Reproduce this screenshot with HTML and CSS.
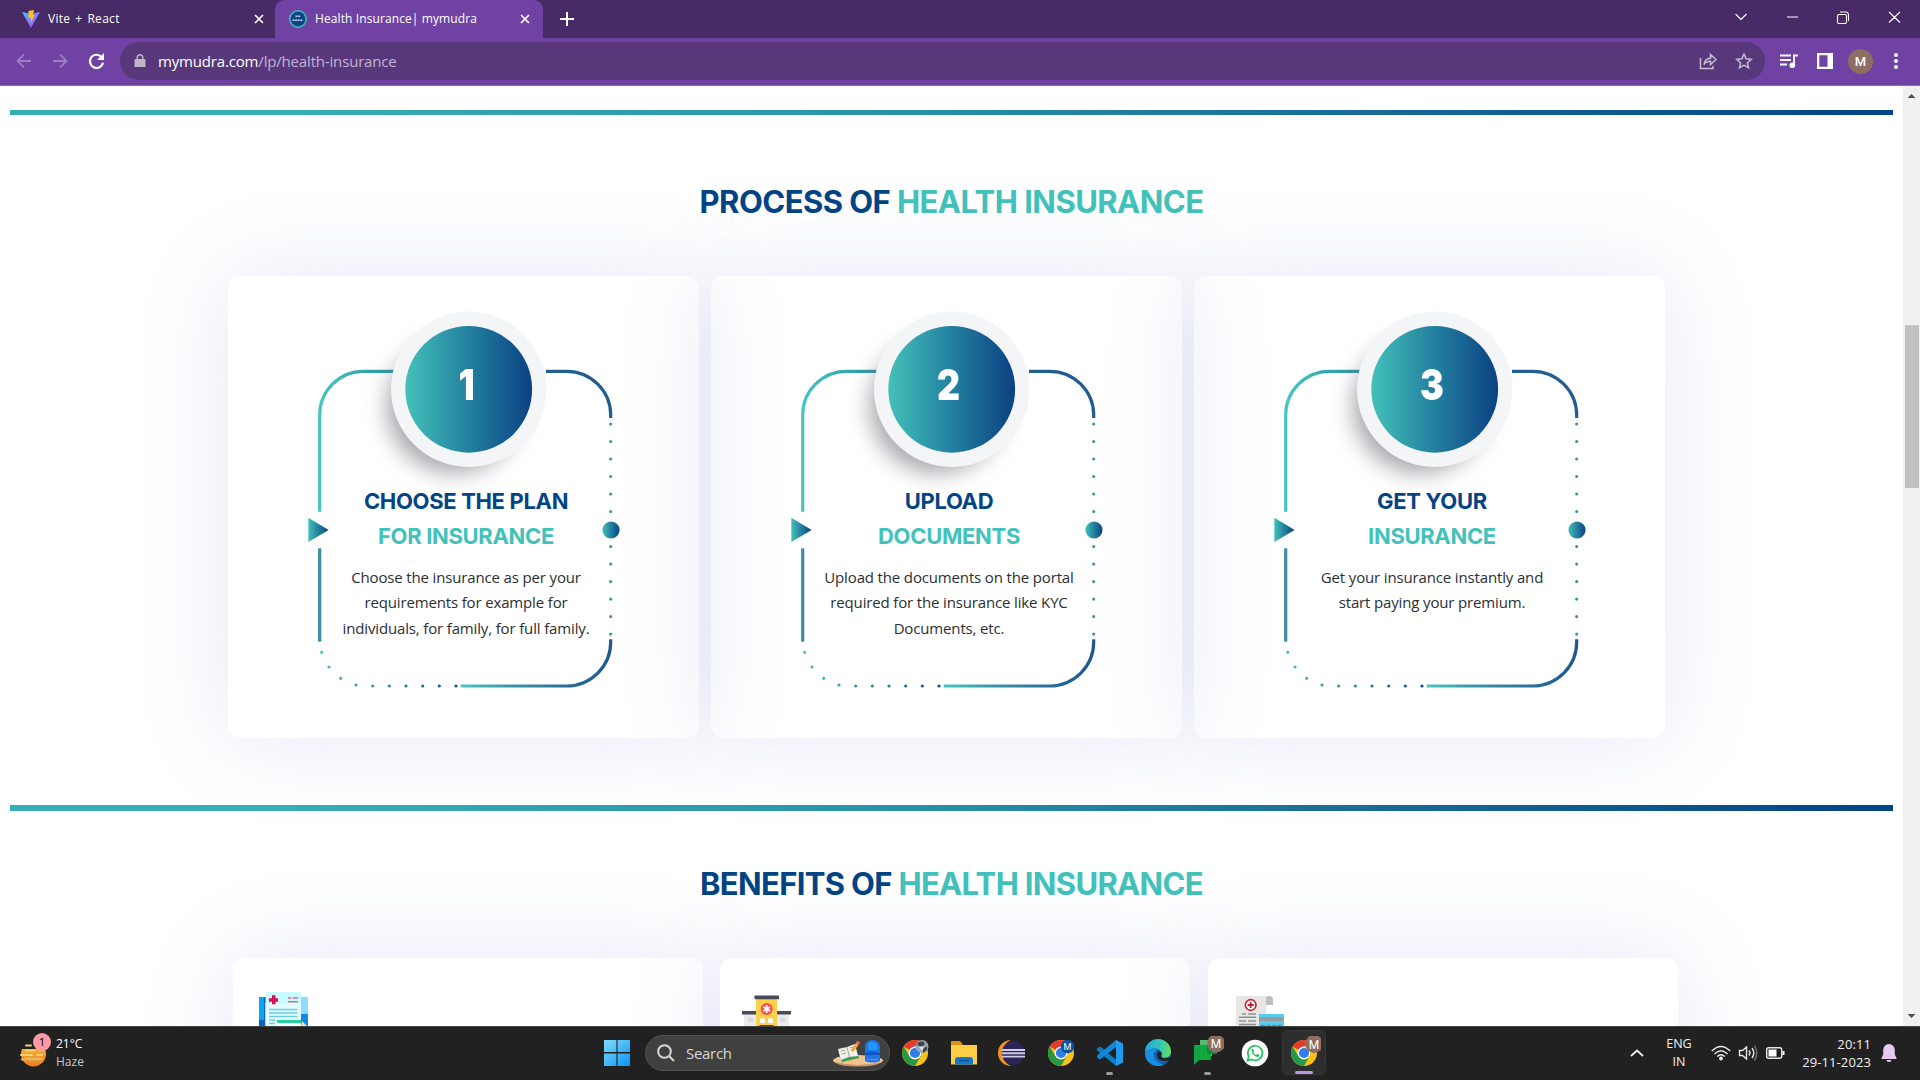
FILE: index.html
```html
<!DOCTYPE html>
<html lang="en">
<head>
<meta charset="utf-8">
<title>Health Insurance| mymudra</title>
<link rel="stylesheet" href="styles.css">
</head>
<body>
<svg class="defs" width="0" height="0" aria-hidden="true">
  <defs>
    <linearGradient id="disc"><stop offset="0" stop-color="#43c1b9"/><stop offset=".5" stop-color="#2380a0"/><stop offset="1" stop-color="#0b4182"/></linearGradient>
    <linearGradient id="topLeft" gradientUnits="userSpaceOnUse" x1="92" y1="0" x2="165" y2="0"><stop offset="0" stop-color="#46c5be"/><stop offset="1" stop-color="#2893a5"/></linearGradient>
    <linearGradient id="topRight" gradientUnits="userSpaceOnUse" x1="318" y1="0" x2="383" y2="0"><stop offset="0" stop-color="#1f6292"/><stop offset="1" stop-color="#225b90"/></linearGradient>
    <linearGradient id="bottomRight" gradientUnits="userSpaceOnUse" x1="233" y1="0" x2="383" y2="0"><stop offset="0" stop-color="#4bc6bf"/><stop offset=".3" stop-color="#3c98ab"/><stop offset=".75" stop-color="#286a98"/><stop offset="1" stop-color="#1f588e"/></linearGradient>
    <linearGradient id="dots" gradientUnits="userSpaceOnUse" x1="92" y1="0" x2="230" y2="0"><stop offset="0" stop-color="#46c5be"/><stop offset="1" stop-color="#16498a"/></linearGradient>
    <linearGradient id="winBlue" x2="1" y2="1"><stop offset="0" stop-color="#7fdcfb"/><stop offset="1" stop-color="#0d94f5"/></linearGradient>
    <linearGradient id="vite" x2="1" y2="1"><stop offset="0" stop-color="#41c8ff"/><stop offset="1" stop-color="#bd34fe"/></linearGradient>
    <linearGradient id="edgeTop" x2="1"><stop offset="0" stop-color="#2aa5dc"/><stop offset=".6" stop-color="#35c7b5"/><stop offset="1" stop-color="#6bdf55"/></linearGradient>
    <linearGradient id="haze" x2="0" y2="1"><stop offset="0" stop-color="#f5c542"/><stop offset="1" stop-color="#ee7c1c"/></linearGradient>
    <filter id="soft" x="-40%" y="-40%" width="180%" height="180%"><feGaussianBlur stdDeviation="11"/></filter>
    <symbol id="frame" viewBox="0 0 471 462">
      <g fill="none" stroke-width="3.2">
        <path stroke="url(#topLeft)" d="M166 95.3H135.3A43.7 43.7 0 0 0 91.7 139V235.7"/>
        <path stroke="url(#topRight)" d="M318 95.3H338.7A44 44 0 0 1 382.7 139.3V142"/>
        <path stroke="url(#bottomRight)" d="M382.7 363.3V366A44 44 0 0 1 338.7 410H232.7"/>
        <path stroke="#3b8ba5" d="M91.7 272.3V365.7"/>
        <path stroke="#3e93aa" stroke-linecap="round" stroke-dasharray="0 17.5" d="M382.7 148V236M382.7 270.6V359"/>
      </g>
      <path stroke="url(#dots)" stroke-width="3.2" stroke-linecap="round" d="M93.7 376.3h.01M101 391h.01M112.7 402.3h.01M128 409h.01M144.7 410h.01M161.3 410h.01M178 410h.01M194.7 410h.01M211.3 410h.01M228 410h.01"/>
      <path fill="url(#disc)" d="M80.3 241.7V266L100.7 254Z"/>
      <circle cx="383" cy="254" r="8.6" fill="url(#disc)"/>
      <circle cx="226" cy="130" r="67" fill="#7b7f85" opacity=".68" filter="url(#soft)"/>
      <circle cx="240.7" cy="113.3" r="77.7" fill="#f3f5f7"/>
      <circle cx="240.7" cy="113.3" r="63.4" fill="url(#disc)"/>
    </symbol>
    <symbol id="chrome" viewBox="0 0 28 28">
      <circle cx="14" cy="14" r="13" fill="#fbc116"/>
      <path fill="#e33b2e" d="M14 14 2.74 7.5A13 13 0 0 1 25.26 7.5H14Z"/>
      <path fill="#279847" d="M2.74 7.5A13 13 0 0 0 14 27L19.6 17.3 14 14 8.4 17.3Z"/>
      <circle cx="14" cy="14" r="6.4" fill="#fff"/><circle cx="14" cy="14" r="5.1" fill="#2f7de9"/>
    </symbol>
  </defs>
</svg>

<header class="browser">
  <div class="tabs">
    <div class="tab">
      <svg class="fav" viewBox="0 0 18 18"><path fill="url(#vite)" d="M0 2 9 18 18 2 9 4Z"/><path fill="#ffc21a" d="M6.5 1 12 0 11 5 13 5 8.5 13 9 7.5 6.5 8Z"/></svg>
      <span class="tab-title wide">Vite + React</span>
      <svg class="x" viewBox="0 0 10 10"><path d="M1 1 9 9M9 1 1 9"/></svg>
    </div>
    <div class="tab active">
      <svg class="fav" viewBox="0 0 18 18"><circle cx="9" cy="9" r="8.2" fill="#0b4488" stroke="#3dc1bb" stroke-width="1.5"/><path stroke="#c7d6e8" stroke-width="1.4" stroke-dasharray="2 .6" d="M6.5 6.3H11.5M3.5 10.2H14"/></svg>
      <span class="tab-title">Health Insurance| mymudra</span>
      <svg class="x" viewBox="0 0 10 10"><path d="M1 1 9 9M9 1 1 9"/></svg>
    </div>
    <svg class="plus" viewBox="0 0 14 14"><path d="M7 0V14M0 7H14"/></svg>
    <svg class="winbtns" viewBox="0 0 170 14"><path d="M1.5 4 7 9.5 12.5 4M53 7H64M104 4.5h7a1.5 1.5 0 0 1 1.5 1.5v6a1.5 1.5 0 0 1-1.5 1.5h-6A1.5 1.5 0 0 1 103.5 12V6A1.5 1.5 0 0 1 105 4.5M106 2h5.500a3 3 0 0 1 3 3v6M155 2 166 12.500M166 2 155 12.500"/></svg>
  </div>
  <div class="toolbar">
    <svg class="nav" viewBox="0 0 90 20"><path class="dim" d="M15 10H2M8 3.500 1.500 10 8 16.500M37 10H50M44 3.500 50.500 10 44 16.500"/><path class="bright" d="M85.500 6A6.600 6.600 0 1 0 87 11.700"/><path fill="#fff" d="M88 2V9H81Z"/></svg>
    <div class="address">
      <svg class="lock" viewBox="0 0 12 14"><path fill="#bdb8c4" d="M1.500 5H10.500a.9.900 0 0 1 .9.900V13H.6V5.900A.9.900 0 0 1 1.500 5Z"/><path fill="none" stroke="#bdb8c4" stroke-width="1.400" d="M3.200 5.500V3.500A2.800 2.800 0 0 1 8.800 3.500V5.500"/></svg>
      <span class="url">mymudra.com<span class="path">/lp/health-insurance</span></span>
      <svg class="share" viewBox="0 0 18 18"><path d="M1.500 6V16.500H14V14M5 12.500C5.500 8.500 8 6.500 11.500 6.300V2.500L17 7.500 11.500 12.500V9.300C8.500 9.300 6.500 10.300 5 12.500Z"/></svg>
      <svg class="star" viewBox="0 0 18 18"><path d="M9 2 11.100 6.800 16.300 7.300 12.400 10.700 13.500 15.800 9 13.100 4.500 15.800 5.600 10.700 1.700 7.300 6.900 6.800Z"/></svg>
    </div>
    <svg class="queue" viewBox="0 0 18 16"><path stroke="#fff" stroke-width="1.800" d="M0 2.500H11M0 7H11M0 11.500H7M14 12V2.500H18"/><circle cx="12.300" cy="12.200" r="2.800" fill="#fff"/></svg>
    <svg class="side" viewBox="0 0 16 16"><path fill="#fff" fill-rule="evenodd" d="M0 0H16V16H0ZM2.300 2.300V13.700H10.500V2.300Z"/></svg>
    <span class="avatar">M</span>
    <svg class="more" viewBox="0 0 4 16"><circle cx="2" cy="2" r="2"/><circle cx="2" cy="8" r="2"/><circle cx="2" cy="14" r="2"/></svg>
  </div>
</header>

<div class="viewport">
  <main class="page">
    <div class="rule first"></div>
    <h2 class="title process-title">PROCESS OF <span>HEALTH INSURANCE</span></h2>
    <section class="steps">
      <article class="step">
        <svg class="frame"><use href="#frame"/></svg>
        <div class="step-body">
          <div class="num">1</div>
          <h3>CHOOSE THE PLAN<span>FOR INSURANCE</span></h3>
          <p>Choose the insurance as per your requirements for example for individuals, for family, for full family.</p>
        </div>
      </article>
      <article class="step">
        <svg class="frame"><use href="#frame"/></svg>
        <div class="step-body">
          <div class="num">2</div>
          <h3>UPLOAD<span>DOCUMENTS</span></h3>
          <p>Upload the documents on the portal required for the insurance like KYC Documents, etc.</p>
        </div>
      </article>
      <article class="step">
        <svg class="frame"><use href="#frame"/></svg>
        <div class="step-body">
          <div class="num">3</div>
          <h3>GET YOUR<span>INSURANCE</span></h3>
          <p>Get your insurance instantly and start paying your premium.</p>
        </div>
      </article>
    </section>
    <div class="rule second"></div>
    <h2 class="title benefits-title">BENEFITS OF <span>HEALTH INSURANCE</span></h2>
    <section class="benefits">
      <article class="benefit">
        <svg viewBox="0 0 54 54"><path fill="#06a9ee" d="M3 7H10V54H3Z"/><path fill="#0a63c4" d="M3 30H10V54H3ZM8 7H10V54H8Z"/><path fill="#8edcff" d="M45 7H52V24H45Z"/><path fill="#0c8be8" d="M45 24H52V54H45Z"/><path fill="#c9fbff" d="M9.500 2H45V54H9.500Z"/><path fill="#e5fdff" d="M9.500 13H45V54H9.500Z"/><path fill="#d80f55" d="M16 5.200H19.500V8.200H22V11.800H19.500V14.200H16V11.800H13V8.200H16Z"/><path stroke="#cf6d93" stroke-width="1.400" d="M32 8H35M36.500 8H42M32 11.700H42"/><path stroke="#66cdf0" stroke-width="1.600" d="M13 19.500H41.500M13 23H41.500M13 26.500H41.500M13 30H19M13 33.500H19"/><path fill="#25cfa0" d="M21 30H45V33H21Z"/><path fill="#fff" d="M21 33H45V40H21Z"/><path fill="#f6dcc0" d="M46 31 52 37H45Z"/></svg>
      </article>
      <article class="benefit">
        <svg viewBox="0 0 54 54"><path fill="#e9ebed" d="M2 24H47V54H2Z"/><path fill="#d4d8db" d="M6 27.500H11V32H6ZM38 27.500H43V32H38Z"/><path fill="#464a5b" d="M0 21H49V24.500H0Z"/><path fill="#fdcf4a" d="M14 8H35V54H14Z"/><path fill="#464a5b" d="M12.500 5.500H37V9.200H12.500ZM17.500 35H31.500V40H17.500Z"/><circle cx="24.700" cy="19" r="6" fill="#f5504d"/><path stroke="#fff" stroke-width="1.700" d="M24.700 15V23M21.300 17 28.100 21M21.300 21 28.100 17"/><path fill="#fff" d="M18 28.500h5v4.500h-5ZM26 28.500h5v4.500h-5Z"/></svg>
      </article>
      <article class="benefit">
        <svg viewBox="0 0 54 54"><path fill="#bcbfc0" d="M33 6H38A4 4 0 0 1 42 10V15H35Z"/><path fill="#e6e6e4" d="M5 6H38A3 3 0 0 0 35 9V54H5Z"/><circle cx="19.700" cy="15" r="5.300" fill="#fff" stroke="#bd2a33" stroke-width="1.700"/><path stroke="#bd2a33" stroke-width="1.900" d="M19.700 12V18M16.700 15H22.700"/><path stroke="#929292" stroke-width="1.400" d="M11 24H15M17 24H25M8 27.300H25M8 31H15M17 31H25M8 34.500H25"/><path fill="#5bcbf0" d="M28 24H53V54H28Z"/><path fill="#949da1" d="M28 27H53V31H28Z"/><path stroke="#2aa2ce" stroke-width="1.500" stroke-dasharray="4 1.500" d="M30 35.500H51"/></svg>
      </article>
    </section>
  </main>
  <aside class="scrollbar"><i class="up"></i><i class="thumb"></i><i class="down"></i></aside>
</div>

<footer class="taskbar">
  <div class="weather">
    <svg viewBox="0 0 34 40"><circle cx="13.500" cy="21" r="12.500" fill="url(#haze)"/><path fill="#212121" d="M0 8H17V16H0Z"/><path stroke="#f3cf6a" stroke-width="2" stroke-linecap="round" d="M6 12.500H11M6 17.500H14M1 22H12M17 22H22M6 26H21"/><path stroke="#e5ae62" stroke-width="2" d="M1 26.500H21"/><circle cx="22" cy="9" r="9" fill="#ff99a4"/><text x="22" y="13" text-anchor="middle" font-size="11.500">1</text></svg>
    <div>21°C<br><span>Haze</span></div>
  </div>
  <nav class="apps">
    <span class="app start"><svg viewBox="0 0 26 26"><path fill="url(#winBlue)" d="M0 0H12.400V12H0ZM13.500 0H26V12H13.500ZM0 13.500H12.400V26H0ZM13.500 13.500H26V26H13.500Z"/></svg></span>
    <div class="search">
      <svg class="lens" viewBox="0 0 18 18"><circle cx="7.500" cy="7.500" r="6.300"/><path d="M12 12 17 17"/></svg>
      <span>Search</span>
      <svg class="desk" viewBox="0 0 52 28"><ellipse cx="26" cy="21.500" rx="25" ry="5.500" fill="#efc392"/><path fill="#c99363" d="M3 23Q26 29 49 23Q45 27.500 26 27.500T3 23Z"/><path fill="#3f9b52" d="M6 12 23 7 27 19 10 23Z"/><path fill="#f3f0ea" d="M6 10 15 8 23 5 26 17 17 18 9 21Z"/><path stroke="#9da3a5" d="M15 8 17.500 18M9 12 13 11M10 15 14 14M18 9 21 8M19 12 22 11"/><path stroke="#f2a93b" stroke-width="3.200" d="M20 12 26 4"/><path stroke="#ed5a4d" stroke-width="3.200" d="M25.200 5 27 2.500"/><path fill="#1877e8" d="M33 22V9Q33 1 40.500 1T48 9V22Q40 25 33 22Z"/><path fill="#2396ff" d="M36 5Q40 1 45 5V11H36Z"/><path fill="#0e55ce" d="M33 14Q40 11 48 14V16H33Z"/><path stroke="#b65ee8" stroke-width="1.300" d="M35 20.500H46"/></svg>
    </div>
    <span class="app"><svg viewBox="0 0 28 28"><use href="#chrome"/><circle cx="21" cy="7.500" r="6.500" fill="#9aa5ad"/><path fill="#3d464d" d="M16 5Q20 0 24 4L22 8 18 7ZM22 10 26 7 26 11 22 14Z"/><path fill="#dfe4e6" d="M18 8 23 7 21 12Z"/></svg></span>
    <span class="app"><svg viewBox="0 0 28 28"><path fill="#d99310" d="M1 2H10L12.500 5V12H1Z"/><path fill="#fdce45" d="M1 6H27V25.500H1Z"/><path fill="#1279cf" d="M5 25.500V21A3 3 0 0 1 8 18H20A3 3 0 0 1 23 21V25.500Z"/><path stroke="#0a4d90" stroke-width="1.300" d="M9 21.500H19"/></svg></span>
    <span class="app"><svg viewBox="0 0 28 28"><path fill="#f2941f" d="M13 1A13 13 0 0 0 13 27 14 14 0 0 1 13 1Z"/><circle cx="15.500" cy="14" r="11.700" fill="#2f2457"/><path stroke="#cfcbe3" stroke-width="1.900" d="M4 11H27M4 14.300H27M4 17.600H27"/></svg></span>
    <span class="app"><svg viewBox="0 0 28 28"><use href="#chrome"/><circle cx="20.500" cy="7.500" r="6.800" fill="#0b549c"/><text class="mk" x="20.500" y="10.700" font-size="9">M</text></svg></span>
    <span class="app run"><svg viewBox="0 0 28 28"><path fill="#1f9cf0" d="M20 1 27 4.500V23.500L20 27Z"/><path fill="#0a7dc8" d="M1 9.500 4 7.500 20 20.500V27L1 11.500Z"/><path fill="#1287d6" d="M1 18.500 4 20.500 20 8V1L1 16.500Z"/></svg></span>
    <span class="app"><svg viewBox="0 0 28 28"><circle cx="14" cy="14" r="13" fill="#0f62b4"/><path fill="url(#edgeTop)" d="M1 13A13 13 0 0 1 27 13C27 18 22 19.500 18 18.500 16 18 18 16.500 17.500 14 16.500 10 9 7 1 13Z"/><path fill="#1a8fdf" d="M1 14C4 8.500 11 8.500 13.500 11 9 12 8.500 19 13 22.500 16 25 20 26 20 26 12 29 1 25 1 14Z"/><path fill="#212121" d="M13 15C13.500 12 17 11.500 17.500 14 18 16.500 16.500 17.200 18 18.500 20 20 24 19 27 17.500L25 21C18 24 12.500 20 13 15Z"/></svg></span>
    <span class="app run"><svg viewBox="0 0 34 34"><path fill="#57bb6c" d="M10 4H22V20H10Z"/><path fill="#0b8b35" d="M17 9H27V18H17Z"/><path fill="#10a741" d="M4 9H17V18H21V24H9L4 29Z"/><circle cx="26" cy="7.500" r="9" fill="#8d6e63"/><text class="mk" x="26" y="12" font-size="12">M</text></svg></span>
    <span class="app"><svg viewBox="0 0 28 28"><circle cx="14" cy="14" r="13.300" fill="#fff"/><path fill="none" stroke="#25c05c" stroke-width="1.700" d="M6.500 21.500 7.700 17.500A7.300 7.300 0 1 1 10.500 20.400Z"/><path fill="#25c05c" d="M10.500 10 12 9.800 13 12 12.200 13.200Q13.200 15.200 15.200 16L16.400 14.800 18.500 15.900Q18.300 18 16.300 18 10.500 16.800 10.500 10Z"/></svg></span>
    <span class="app run current"><svg viewBox="0 0 34 34"><use href="#chrome" x="3" y="3" width="28" height="28"/><circle cx="27" cy="8" r="9" fill="#8d6e63"/><text class="mk" x="27" y="12.500" font-size="12">M</text></svg></span>
  </nav>
  <div class="tray">
    <svg class="chev" viewBox="0 0 14 8"><path d="M1 7 7 1.500 13 7"/></svg>
    <div class="lang">ENG<br>IN</div>
    <svg class="status" viewBox="0 0 74 20">
      <g fill="none" stroke="#e8e8e8" stroke-width="1.400"><path d="M.8 8Q10 -1 19.200 8M3.500 11Q10 4.500 16.500 11M6.200 13.500Q10 10 13.800 13.500"/>
      <path d="M28.500 7.500H31.500L35.500 4V16L31.500 12.500H28.500ZM38 7.500Q39.800 10 38 12.500M41 5Q44.500 10 41 15"/><path stroke="#777" d="M43.500 2.500Q48 10 43.500 17.500"/><rect x="55.700" y="4.700" width="15" height="10.600" rx="2"/></g>
      <circle cx="10" cy="15.500" r="1.900" fill="#e8e8e8"/><path fill="#fff" d="M57.500 6.500H65.500V13.500H57.500ZM71.500 8H73.500V12H71.500Z"/></svg>
    <div class="clock">20:11<br>29-11-2023</div>
    <svg class="bell" viewBox="0 0 16 18"><path fill="#e5c9ef" d="M8 0A5.800 5.800 0 0 1 13.800 5.800V10.500L15.500 14V15H.5V14L2.200 10.500V5.800A5.800 5.800 0 0 1 8 0ZM5.500 16H10.500A2.500 2 0 0 1 5.500 16Z"/></svg>
  </div>
</footer>
</body>
</html>
```
FILE: styles.css
```css
* { box-sizing: border-box; }
body {
  margin: 0;
  width: 1920px;
  height: 1080px;
  overflow: hidden;
  display: flex;
  flex-direction: column;
  font-family: "Open Sans", "Noto Sans", sans-serif;
  background: #fff;
}
svg { display: block; flex: none; }
.defs { position: absolute; }
h2, h3, p { margin: 0; }

/* Browser chrome */
.browser { height: 86px; flex: none; background: #6f42a3; border-bottom: 1px solid #9068bd; color: #fff; }
.tabs { height: 38px; display: flex; align-items: center; background: #472a66; padding-right: 16px; }
.tab { height: 38px; width: 275px; display: flex; align-items: center; padding: 0 11px 0 22px; }
.tab.active { width: 268px; padding: 0 13px 0 14px; background: #6f42a3; border-radius: 9px 9px 0 0; }
.fav { width: 18px; height: 18px; }
.tab-title { margin-left: 8px; flex: 1; font-size: 12px; line-height: 18px; letter-spacing: .1px; white-space: nowrap; }
.tab-title.wide { letter-spacing: .3px; word-spacing: 1.5px; }
.x { width: 10px; height: 10px; fill: none; stroke: #fff; stroke-width: 1.7; }
.plus { width: 14px; height: 14px; margin-left: 17px; fill: none; stroke: #fff; stroke-width: 2; }
.winbtns { width: 170px; height: 14px; margin-left: auto; margin-top: -5px; fill: none; stroke: #fff; stroke-width: 1.1; }
.toolbar { height: 46px; display: flex; align-items: center; padding: 0 22px 0 16px; }
.nav { width: 90px; height: 20px; fill: none; stroke-width: 1.8; }
.nav .dim { stroke: #9d7dc2; }
.nav .bright { stroke: #fff; stroke-width: 2.2; }
.address { width: 1645px; height: 38px; margin-left: 14px; display: flex; align-items: center; background: #58387a; border-radius: 19px; padding: 0 12px 0 14px; }
.lock { width: 12px; height: 14px; }
.url { margin-left: 12px; padding-bottom: 1px; font-size: 15px; line-height: 20px; letter-spacing: -.17px; flex: 1; }
.path { color: #c3b2d6; }
.share, .star { width: 18px; height: 18px; fill: none; stroke: #c7bdd2; stroke-width: 1.5; }
.star { margin-left: 18px; }
.queue { width: 18px; height: 16px; margin-left: 15px; fill: none; }
.side { width: 16px; height: 16px; margin-left: 19px; }
.avatar { width: 25px; height: 25px; margin-left: 15px; border-radius: 50%; background: #8d6e63; font: 500 13px/25px Roboto, sans-serif; text-align: center; }
.more { width: 4px; height: 16px; margin-left: auto; fill: #fff; }

/* Page */
.viewport { height: 940px; flex: none; display: flex; overflow: hidden; }
.page { width: 1903px; padding-top: 24px; overflow: hidden; }
.rule { margin: 0 10px; background: linear-gradient(90deg, #37adb4 0%, #37adb4 15%, #2b95a8 45%, #1c7399 67%, #034687 98%); }
.rule.first { height: 5px; }
.rule.second { height: 6px; margin-top: 67px; position: relative; }
.title { font: 700 31px/38px Inter, sans-serif; letter-spacing: -.55px; color: #034485; text-align: center; }
.title span { color: #42c2bb; }
.process-title { margin-top: 68px; }
.benefits-title { margin-top: 54px; letter-spacing: -.67px; }
.steps { display: flex; gap: 12px; margin: 55px 0 0 228px; }
.step { width: 471px; height: 462px; display: grid; border-radius: 12px; box-shadow: 0 0 96px rgba(68, 88, 190, .13); }
.frame, .step-body { grid-area: 1 / 1; }
.frame { width: 471px; height: 462px; }
.step-body { padding: 84px 0 0 5px; display: flex; flex-direction: column; align-items: center; text-align: center; }
.num { font: 900 42px/50px Inter, sans-serif; color: #fff; transform: scaleX(.85); }
.step h3 { margin-top: 74px; font: 700 22px/35px Inter, sans-serif; letter-spacing: -.33px; color: #034485; }
.step h3 span { display: block; color: #42c2bb; }
.step p { width: 256px; margin-top: 10.6px; font-size: 15px; line-height: 25.6px; letter-spacing: -.15px; color: #2b2f33; }
.benefits { display: flex; gap: 17.3px; margin: 55px 0 0 233px; }
.benefit { width: 470px; height: 260px; padding: 32px 23px; background: #fff; border-radius: 12px; box-shadow: 0 0 96px rgba(68, 88, 190, .13); }
.benefit svg { width: 54px; height: 54px; }
.benefit:nth-child(2) { padding-left: 22px; }
.scrollbar { width: 17px; background: #f0f0f0; display: flex; flex-direction: column; align-items: center; padding: 8px 0; }
.up, .down { width: 8px; height: 4px; background: #505050; clip-path: polygon(50% 0, 100% 100%, 0 100%); }
.thumb { width: 14px; height: 163px; margin: 227px 0 0 1px; background: #c1c1c1; }
.down { margin-top: auto; clip-path: polygon(0 0, 100% 0, 50% 100%); }

/* Taskbar */
.taskbar { height: 54px; flex: none; display: flex; background: #212121; border-top: 1px solid #444; color: #fff; }
.weather { width: 592px; display: flex; padding-left: 20px; }
.weather svg { width: 34px; height: 40px; margin-top: 6px; }
.weather div { margin: 8px 0 0 2px; font-size: 12px; line-height: 18px; }
.weather span { color: #c8c8c8; }
.apps { display: flex; align-items: center; padding-bottom: 2px; }
.app { width: 48.6px; height: 45px; display: grid; place-items: center; position: relative; }
.app svg { width: 28px; height: 28px; }
.app svg[viewBox="0 0 34 34"] { width: 34px; height: 34px; }
.app.start { width: 49px; }
.start svg { width: 26px; height: 26px; }
.app.run::after { content: ""; position: absolute; bottom: 0; left: 21px; width: 7px; height: 3px; border-radius: 2px; background: #9b9b9b; }
.app.current { width: 44px; margin-left: 2px; background: #2e2e2e; border: 1px solid #373737; border-radius: 5px; }
.app.current::after { left: 12px; width: 18px; background: #b89ad6; }
.mk { font-family: Roboto, sans-serif; fill: #fff; text-anchor: middle; }
.search { width: 245px; height: 36px; margin: 0 1px 0 4px; display: flex; align-items: center; padding: 0 5px 0 11px; background: #404040; border: 1px solid #535353; border-radius: 18px; font-size: 15px; letter-spacing: -.3px; color: #d6d6d6; }
.lens { width: 18px; height: 18px; fill: none; stroke: #d8d8d8; stroke-width: 2; }
.search span { margin-left: 11px; flex: 1; }
.desk { width: 52px; height: 28px; }
.tray { margin-left: auto; display: flex; align-items: center; padding: 0 23px 2px 0; font-size: 13px; line-height: 18px; color: #f0f0f0; }
.chev { width: 14px; height: 8px; fill: none; stroke: #eee; stroke-width: 1.8; }
.lang { width: 40px; margin-left: 15px; text-align: center; font-size: 12.5px; }
.status { width: 74px; height: 20px; margin-left: 12px; }
.clock { width: 80px; margin-left: 6px; text-align: right; letter-spacing: .1px; }
.bell { width: 16px; height: 18px; margin-left: 10px; }
```
